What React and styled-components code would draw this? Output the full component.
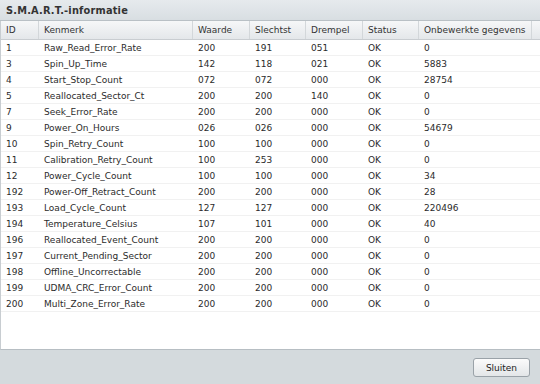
import styled, { createGlobalStyle } from "styled-components"

const GlobalStyle = createGlobalStyle`
  html, body {
    margin: 0;
    padding: 0;
    background: #d4dadd;
  }
  body {
    font-family: "DejaVu Sans", Verdana, sans-serif;
    font-size: 9px;
    color: #2b2b2b;
  }
`

const columns = [
  { key: "id", label: "ID", width: 38 },
  { key: "name", label: "Kenmerk", width: 154 },
  { key: "value", label: "Waarde", width: 57 },
  { key: "worst", label: "Slechtst", width: 56 },
  { key: "thresh", label: "Drempel", width: 57 },
  { key: "status", label: "Status", width: 56 },
  { key: "raw", label: "Onbewerkte gegevens", width: 113 },
]

const rows = [
  [1, "Raw_Read_Error_Rate", "200", "191", "051", "OK", "0"],
  [3, "Spin_Up_Time", "142", "118", "021", "OK", "5883"],
  [4, "Start_Stop_Count", "072", "072", "000", "OK", "28754"],
  [5, "Reallocated_Sector_Ct", "200", "200", "140", "OK", "0"],
  [7, "Seek_Error_Rate", "200", "200", "000", "OK", "0"],
  [9, "Power_On_Hours", "026", "026", "000", "OK", "54679"],
  [10, "Spin_Retry_Count", "100", "100", "000", "OK", "0"],
  [11, "Calibration_Retry_Count", "100", "253", "000", "OK", "0"],
  [12, "Power_Cycle_Count", "100", "100", "000", "OK", "34"],
  [192, "Power-Off_Retract_Count", "200", "200", "000", "OK", "28"],
  [193, "Load_Cycle_Count", "127", "127", "000", "OK", "220496"],
  [194, "Temperature_Celsius", "107", "101", "000", "OK", "40"],
  [196, "Reallocated_Event_Count", "200", "200", "000", "OK", "0"],
  [197, "Current_Pending_Sector", "200", "200", "000", "OK", "0"],
  [198, "Offline_Uncorrectable", "200", "200", "000", "OK", "0"],
  [199, "UDMA_CRC_Error_Count", "200", "200", "000", "OK", "0"],
  [200, "Multi_Zone_Error_Rate", "200", "200", "000", "OK", "0"],
]

const template = columns.map(c => `${c.width}px`).join(" ") + " 1fr"

const Window = styled.div`
  width: 540px;
  height: 384px;
  display: flex;
  flex-direction: column;
  background: #d4dadd;
  overflow: hidden;
`

const TitleBar = styled.div`
  height: 20px;
  flex: none;
  display: flex;
  align-items: center;
  padding-left: 6px;
  background: linear-gradient(#e6eaed, #d8dee2);
  border-bottom: 1px solid #b9c0c5;
  font-weight: bold;
  font-size: 9.8px;
  color: #333;
  letter-spacing: 0.2px;
`

const Panel = styled.div`
  height: 329px;
  flex: none;
  background: #fff;
  border-left: 1px solid #c8cdd1;
  border-bottom: 1px solid #b7bec3;
  box-sizing: border-box;
`

const Row = styled.div`
  display: grid;
  grid-template-columns: ${template};
  height: 16px;
  align-items: center;
  border-bottom: 1px solid ${p => (p.$head ? "#c9cdd1" : "#f1f1f1")};
  box-sizing: border-box;
  padding-top: 1px;
  ${p => p.$head && `
    height: 19px;
    padding-top: 0;
    background: linear-gradient(#f6f7f8, #e4e7ea);
    color: #333;
  `}
`

const Cell = styled.div`
  padding-left: 5px;
  height: 100%;
  display: flex;
  align-items: center;
  white-space: nowrap;
  overflow: hidden;
  border-right: ${p => (p.$head ? "1px solid #d3d7da" : "none")};
  box-sizing: border-box;
  &:last-child {
    border-right: none;
  }
`

const Footer = styled.div`
  flex: 1;
  display: flex;
  justify-content: flex-end;
  align-items: center;
  padding-right: 10px;
`

const Button = styled.button`
  width: 57px;
  height: 19px;
  font-family: inherit;
  font-size: 9px;
  color: #222;
  border: 1px solid #9aa2a8;
  border-radius: 3px;
  background: linear-gradient(#fbfbfb, #e3e6e8);
  padding: 0;
  margin-top: 1px;
`

const App = () => {
  return (
    <>
      <GlobalStyle />
      <Window>
        <TitleBar>S.M.A.R.T.-informatie</TitleBar>
        <Panel>
          <Row $head>
            {columns.map(c => (
              <Cell $head key={c.key}>{c.label}</Cell>
            ))}
            <Cell />
          </Row>
          {rows.map(r => (
            <Row key={r[0]}>
              {r.map((v, i) => (
                <Cell key={i}>{v}</Cell>
              ))}
              <Cell />
            </Row>
          ))}
        </Panel>
        <Footer>
          <Button>Sluiten</Button>
        </Footer>
      </Window>
    </>
  )
}

export default App
